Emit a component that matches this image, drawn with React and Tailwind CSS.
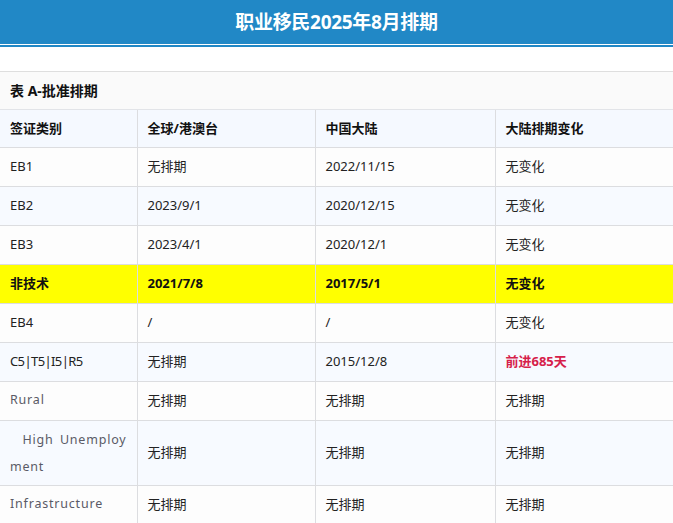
const rows = [
  { type: "EB1", global: "无排期", china: "2022/11/15", change: "无变化", bg: "bg-[#fdfdfd]" },
  { type: "EB2", global: "2023/9/1", china: "2020/12/15", change: "无变化", bg: "bg-[#f7faff]" },
  { type: "EB3", global: "2023/4/1", china: "2020/12/1", change: "无变化", bg: "bg-[#fdfdfd]" },
  { type: "非技术", global: "2021/7/8", china: "2017/5/1", change: "无变化", bg: "bg-[#ffff00]", bold: true },
  { type: "EB4", global: "/", china: "/", change: "无变化", bg: "bg-[#fdfdfd]" },
  { type: "C5|T5|I5|R5", global: "无排期", china: "2015/12/8", change: "前进685天", bg: "bg-[#f7faff]", red: true },
  { type: "Rural", global: "无排期", china: "无排期", change: "无排期", bg: "bg-[#fdfdfd]", latin: true },
  { type: "\u00a0 High Unemployment", global: "无排期", china: "无排期", change: "无排期", bg: "bg-[#f7faff]", latin: true, wrap: true },
  { type: "Infrastructure", global: "无排期", china: "无排期", change: "无排期", bg: "bg-[#fdfdfd]", latin: true },
];

const cell = "border-b border-r border-[#dcdde0] px-[10px] align-middle";

export default function App() {
  return (
    <div
      className="w-[673px] h-[523px] overflow-hidden bg-white text-[#222]"
      style={{ fontFamily: '"Noto Sans", "Noto Sans CJK SC", sans-serif' }}
    >
      <div className="h-[44px] bg-[#2188c6] flex items-center justify-center">
        <h1 className="text-white text-[19px] font-bold tracking-[-0.3px] leading-none">职业移民2025年8月排期</h1>
      </div>
      <div className="h-[1px] bg-white" />
      <div className="h-[2px] bg-[#2188c6]" />
      <div className="h-[25px] bg-white border-b border-[#dedede]" />
      <div className="h-[38px] bg-[#fafafa] flex items-center px-[10px] border-b border-[#e2e4e8]">
        <span className="text-[14px] font-bold text-[#111]">表&nbsp;A-批准排期</span>
      </div>
      <table className="w-[690px] table-fixed border-collapse text-[13px]">
        <colgroup>
          <col className="w-[137px]" />
          <col className="w-[178px]" />
          <col className="w-[180px]" />
          <col />
        </colgroup>
        <thead>
          <tr className="h-[37px] bg-[#f5f9ff] font-bold text-[#111]">
            <td className={cell}>签证类别</td>
            <td className={cell}>全球/港澳台</td>
            <td className={cell}>中国大陆</td>
            <td className={cell}>大陆排期变化</td>
          </tr>
        </thead>
        <tbody>
          {rows.map((r, i) => (
            <tr key={i} className={`${r.wrap ? "h-[65px]" : "h-[39px]"} ${r.bg} ${r.bold ? "font-bold text-[#111]" : ""}`}>
              <td className={cell}>
                {r.latin ? (
                  <div
                    className={`text-[12.5px] tracking-[0.8px] text-[#5a5a66] ${r.wrap ? "break-all text-justify leading-[27px]" : ""}`}
                  >
                    {r.type}
                  </div>
                ) : (
                  <span className={r.type.includes("|") ? "tracking-[-0.6px]" : ""}>{r.type}</span>
                )}
              </td>
              <td className={cell}>{r.global}</td>
              <td className={cell}>{r.china}</td>
              <td className={cell}>
                {r.red ? <span className="font-bold text-[#d6204a]">{r.change}</span> : r.change}
              </td>
            </tr>
          ))}
        </tbody>
      </table>
    </div>
  );
}
